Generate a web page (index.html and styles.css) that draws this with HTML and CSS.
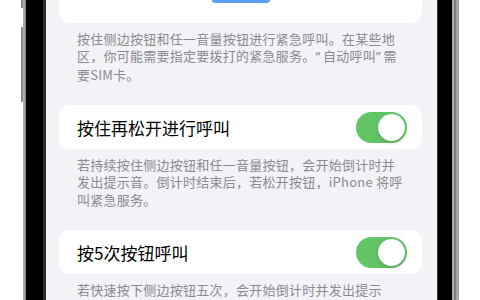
FILE: index.html
```html
<!DOCTYPE html>
<html lang="zh-Hans">
<head>
<meta charset="utf-8">
<link rel="stylesheet" href="styles.css">
</head>
<body>
<div class="phone">
  <div class="btn btn-action"></div>
  <div class="btn btn-vol"></div>
  <div class="bezel">
    <div class="screen">
      <div class="card card-top"><div class="blue-pill"></div></div>
      <p class="footer">按住侧边按钮和任一音量按钮进行紧急呼叫。在某些地区，你可能需要指定要拨打的紧急服务。<span class="q">“</span>自动呼叫<span class="q">”</span>需要SIM卡。</p>

      <div class="card row">
        <span class="title">按住再松开进行呼叫</span>
        <span class="toggle"><span class="knob"></span></span>
      </div>
      <p class="footer">若持续按住侧边按钮和任一音量按钮，会开始倒计时并发出提示音。倒计时结束后，若松开按钮，iPhone 将呼叫紧急服务。</p>

      <div class="card row">
        <span class="title">按5次按钮呼叫</span>
        <span class="toggle"><span class="knob"></span></span>
      </div>
      <p class="footer">若快速按下侧边按钮五次，会开始倒计时并发出提示音。倒计时结束后，iPhone 将呼叫紧急服务。</p>
    </div>
  </div>
</div>
</body>
</html>
```

FILE: styles.css
```css
html, body {
  margin: 0;
  padding: 0;
  background: #ffffff;
  overflow: hidden;
}
body {
  width: 480px;
  height: 300px;
  font-family: "Noto Sans CJK SC", "Noto Sans", sans-serif;
}
.phone {
  position: relative;
  margin-left: 23px;
  width: 436px;
  height: 300px;
  box-sizing: border-box;
  padding: 0 7px 0 3px;
  background: linear-gradient(90deg, #b9b5b0 0, #8d8883 3px, #8d8883 429px, #c9c5c0 430px, #6f6a66 432px, #b7b3ae 434px, #9c9893 436px);
}
.btn {
  position: absolute;
  left: -2px;
  width: 2px;
  background: #8f8b86;
}
.btn-action { top: 0; height: 8px; }
.btn-vol { top: 27px; height: 75px; }
.bezel {
  height: 100%;
  box-sizing: border-box;
  background: #000;
  padding: 0 14px 0 17px;
  display: flex;
}
.screen {
  flex: 1;
  background: #f2f2f7;
  border-left: 3px solid #2b2b2d;
  border-right: 1px solid #3a3a3c;
  padding: 0 15px 0 13px;
  overflow: hidden;
}
.card {
  background: #ffffff;
  border-radius: 11px;
}
.card-top {
  height: 23px;
  border-radius: 0 0 11px 11px;
  display: flex;
  justify-content: center;
}
.blue-pill {
  width: 58px;
  height: 3px;
  background: #5b9ff2;
  border-radius: 0 0 6px 6px;
}
.footer {
  margin: 6.5px 0 0;
  padding: 0 16px 0 18px;
  font-size: 13px;
  letter-spacing: 0.25px;
  line-height: 17.5px;
  color: #8a8a8e;
}
.q {
  font-family: "Noto Sans", sans-serif;
  letter-spacing: 2.75px;
}
.row {
  margin-top: 22px;
  height: 44px;
  display: flex;
  align-items: center;
  padding: 0 15px 0 18px;
}
.title {
  font-size: 17px;
  color: #000;
}
.toggle {
  margin-left: auto;
  width: 51px;
  height: 31px;
  border-radius: 16px;
  background: #63c466;
  display: flex;
  align-items: center;
  justify-content: flex-end;
  padding: 0 2px;
  box-sizing: border-box;
}
.knob {
  width: 27px;
  height: 27px;
  border-radius: 50%;
  background: #fff;
  box-shadow: 0 2px 4px rgba(0,0,0,0.15), 0 0 1px rgba(0,0,0,0.1);
}
```
